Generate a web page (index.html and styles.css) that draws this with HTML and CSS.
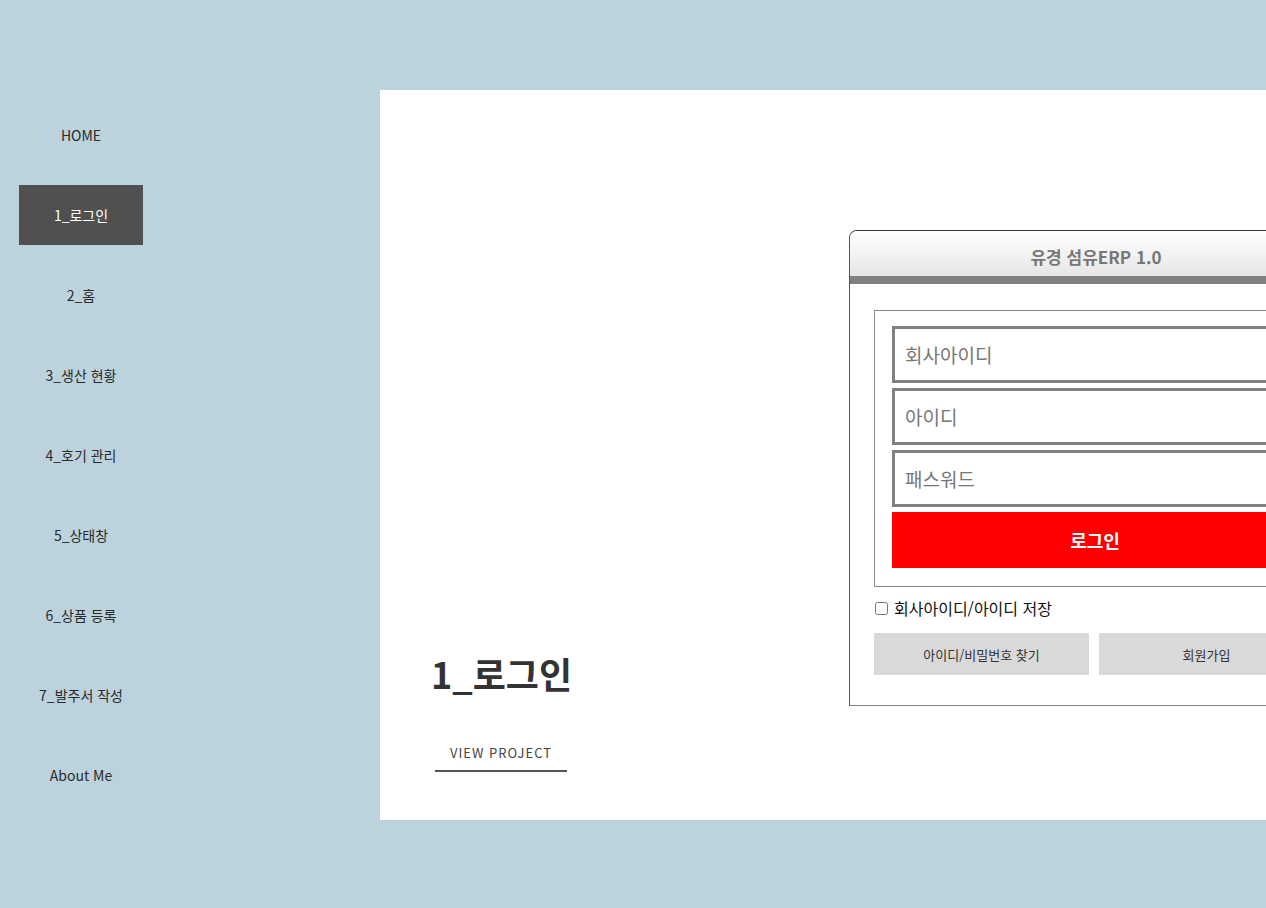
FILE: index.html
```html
<!DOCTYPE html>
<html lang="ko">

<head>
    <meta charset="UTF-8">
    <meta name="viewport" content="width=device-width, initial-scale=1.0">
    <title>Portfolio</title>
    <link rel="stylesheet" href="styles.css">
</head>

<body>
    <div class="page">
        <ul class="nav">
            <li><a href="#">HOME</a></li>
            <li class="current"><a href="#">1_로그인</a></li>
            <li><a href="#">2_홈</a></li>
            <li><a href="#">3_생산 현황</a></li>
            <li><a href="#">4_호기 관리</a></li>
            <li><a href="#">5_상태창</a></li>
            <li><a href="#">6_상품 등록</a></li>
            <li><a href="#">7_발주서 작성</a></li>
            <li><a href="#">About Me</a></li>
        </ul>

        <div class="panel">
            <div class="info">
                <h1>1_로그인</h1>
                <a href="#" class="view">VIEW PROJECT</a>
            </div>

            <div class="login">
                <div class="login-head">유경 섬유ERP 1.0</div>
                <div class="login-body">
                    <form class="login-form">
                        <input type="text" placeholder="회사아이디">
                        <input type="text" placeholder="아이디">
                        <input type="password" placeholder="패스워드">
                        <button type="button">로그인</button>
                    </form>
                    <label class="save">
                        <input type="checkbox"> 회사아이디/아이디 저장
                    </label>
                    <div class="links">
                        <a href="#">아이디/비밀번호 찾기</a>
                        <a href="#">회원가입</a>
                    </div>
                </div>
            </div>
        </div>
    </div>
</body>

</html>
```

FILE: styles.css
```css
* {
    margin: 0;
    padding: 0;
    box-sizing: border-box;
}

html,
body {
    height: 100%;
    overflow: hidden;
}

body {
    background-color: #bcd2dc;
    font-family: "Noto Sans CJK KR", "Noto Sans", sans-serif;
    color: #222;
}

ul {
    list-style: none;
}

a {
    text-decoration: none;
    color: inherit;
}

.page {
    display: flex;
    width: 1500px;
}

.nav {
    width: 380px;
    flex-shrink: 0;
    padding: 105px 0 0 19px;
}

.nav li {
    width: 124px;
    height: 60px;
    margin-bottom: 20px;
}

.nav a {
    display: flex;
    height: 100%;
    align-items: center;
    justify-content: center;
    font-size: 14px;
    color: #2a2a2a;
}

.nav li.current {
    background-color: #505050;
}

.nav li.current a {
    color: #fff;
}

.panel {
    display: flex;
    width: 1000px;
    height: 730px;
    margin-top: 90px;
    padding: 140px 0 48px 51px;
    background-color: #fff;
}

.info {
    width: 418px;
    flex-shrink: 0;
    display: flex;
    flex-direction: column;
    justify-content: flex-end;
    align-items: flex-start;
}

.info h1 {
    font-size: 36px;
    line-height: 44px;
    font-weight: bold;
    color: #333;
    margin-bottom: 49px;
}

.view {
    margin-left: 4px;
    padding: 0 15px 8px;
    font-size: 13px;
    line-height: 18px;
    letter-spacing: 1px;
    color: #444;
    border-bottom: 2px solid #555;
}

.login {
    width: 494px;
    height: 476px;
    border: 1px solid #808080;
    border-top-color: #333;
    border-left-color: #555;
    border-top-left-radius: 8px;
    overflow: hidden;
}

.login-head {
    height: 39px;
    padding-top: 6px;
    border-bottom: 8px solid #808080;
    background: linear-gradient(#fff, #e6e6e6);
    text-align: center;
    font-size: 17px;
    line-height: 39px;
    font-weight: bold;
    color: #777;
    box-sizing: content-box;
}

.login-body {
    padding: 26px 0 0 24px;
}

.login-form {
    display: flex;
    flex-direction: column;
    gap: 5px;
    width: 442px;
    padding: 15px 17px 18px;
    border: 1px solid #888;
}

.login-form input {
    height: 57px;
    border: 3px solid #808080;
    padding-left: 10px;
    font-family: inherit;
    font-size: 19px;
    color: #333;
    outline: none;
}

.login-form input::placeholder {
    color: #777;
}

.login-form button {
    height: 56px;
    border: none;
    background-color: #f00;
    color: #fff;
    font-family: inherit;
    font-size: 18px;
    font-weight: bold;
}

.save {
    display: flex;
    align-items: center;
    gap: 6px;
    margin-top: 11px;
    font-size: 16px;
    line-height: 20px;
    color: #111;
}

.save input {
    width: 13px;
    height: 13px;
    margin-left: 1px;
}

.links {
    display: flex;
    gap: 10px;
    margin-top: 15px;
}

.links a {
    width: 215px;
    height: 42px;
    display: flex;
    align-items: center;
    justify-content: center;
    background-color: #d9d9d9;
    font-size: 13px;
    color: #333;
}
```
